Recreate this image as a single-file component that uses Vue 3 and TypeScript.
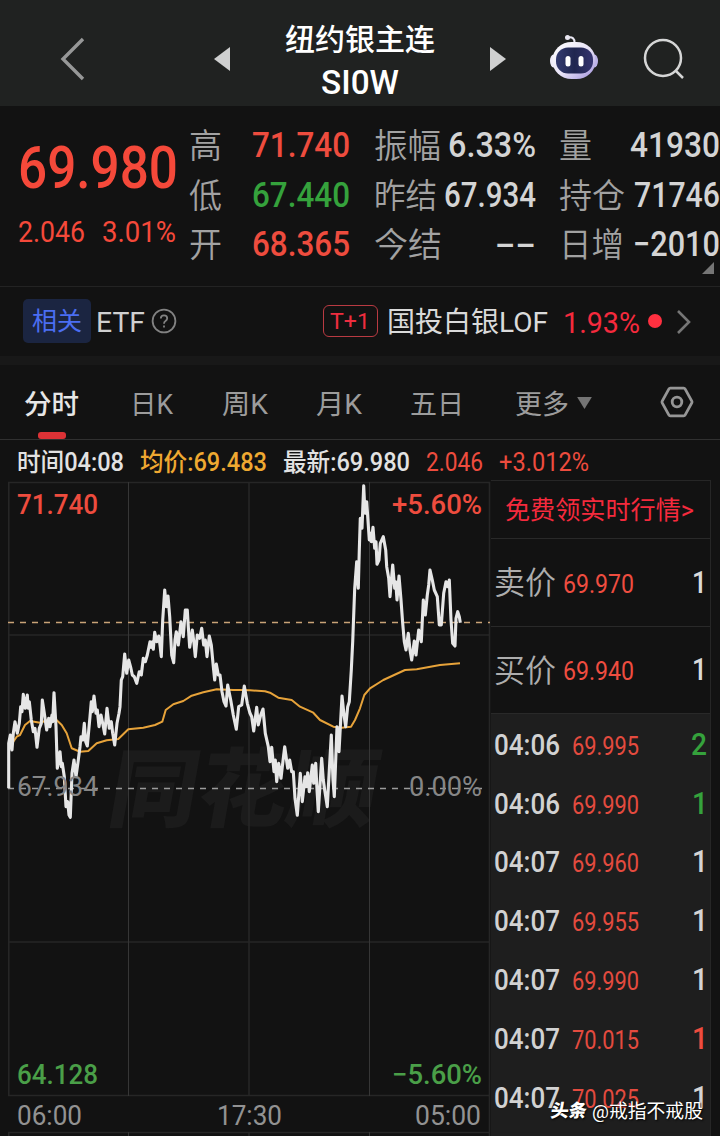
<script setup lang="ts">
import type { Directive } from 'vue'

type Tone = 'up' | 'down' | 'flat'
interface Trade { time: string; price: string; qty: string; tone: Tone }

// Condenses a label horizontally so that it occupies the given width.
const vFit: Directive<HTMLElement, number> = {
  mounted(el, { value }) {
    const natural = el.getBoundingClientRect().width
    el.style.transform = `scaleX(${value / natural})`
    el.style.marginRight = `${value - natural}px`
  },
}

const quotes = [
  [
    { label: '高', lw: 33, value: '71.740', w: 98, tone: 'up' },
    { label: '低', lw: 33, value: '67.440', w: 98, tone: 'down' },
    { label: '开', lw: 33, value: '68.365', w: 98, tone: 'up' },
  ],
  [
    { label: '振幅', lw: 67, value: '6.33%', w: 88, tone: 'flat' },
    { label: '昨结', lw: 63, value: '67.934', w: 92, tone: 'flat' },
    { label: '今结', lw: 68, value: '--', w: 41, tone: 'flat' },
  ],
  [
    { label: '量', lw: 33, value: '41930', w: 90, tone: 'flat' },
    { label: '持仓', lw: 66, value: '71746', w: 86, tone: 'flat' },
    { label: '日增', lw: 65, value: '−2010', w: 87, tone: 'flat' },
  ],
]

const tabs = [
  { name: '分时', w: 55 },
  { name: '日K', w: 43 },
  { name: '周K', w: 46 },
  { name: '月K', w: 46 },
  { name: '五日', w: 54 },
  { name: '更多', w: 54 },
]

const trades: Trade[] = [
  { time: '04:06', price: '69.995', qty: '2', tone: 'down' },
  { time: '04:06', price: '69.990', qty: '1', tone: 'down' },
  { time: '04:07', price: '69.960', qty: '1', tone: 'flat' },
  { time: '04:07', price: '69.955', qty: '1', tone: 'flat' },
  { time: '04:07', price: '69.990', qty: '1', tone: 'flat' },
  { time: '04:07', price: '70.015', qty: '1', tone: 'up' },
  { time: '04:07', price: '70.025', qty: '1', tone: 'flat' },
]

// Series samples are stored in thirds of a pixel, relative to a segment origin.
const segment = (x0: number, y0: number, raw: string): string =>
  raw
    .split(' ')
    .map((p) => {
      const [x, y] = p.split(',').map(Number)
      return `${(x0 + x / 3).toFixed(1)},${(y0 + y / 3).toFixed(1)}`
    })
    .join(' ')

const priceLine = [
  segment(0, 560, '26,685 26,550 31,525 36,570 40,520 45,485 52,520 58,490 62,440 66,455 70,403 76,445 82,405 85,445 88,425 94,480 100,515 105,505 111,562 118,505 124,490 127,420 133,460 140,510 146,475 150,500 156,465 158,485 162,398 168,500 172,625 180,575 184,620 187,610 193,650 198,740 203,725 207,765 211,772 216,640 222,600 228,650 235,600 240,560 243,530 248,540 253,490 257,545 262,558 270,470 274,425 277,455 282,408 288,460 292,450 297,500 303,465 308,490 314,522 321,445 328,505 334,485 338,520 344,555 351,490 357,460 360,440 364,360 368,350 374,282 380,340 386,300 392,322 397,345 403,350 410,370 418,335 424,345 430,295 436,305 442,285 450,245 454,262 458,245 460,268 464,217 470,245 476,228 480,255 484,290 488,180 494,90 499,140 504,108 509,170 515,285 521,308 525,240 529,215 535,255 543,185 550,230 556,150 562,150 565,200 569,262 577,210 582,250 586,290 592,225 599,235 605,205 611,255 616,240 621,290 628,228 634,255 640,320 644,360 649,312 655,345 660,345 666,395 672,425 678,438 683,375 692,420 700,465 709,508 716,440 725,435 733,378'),
  segment(240, 470, '22,700 30,730 35,740 41,783 50,712 55,765 62,735 69,717 76,790 85,830 90,875 95,832 102,905 106,870 110,935 116,880 123,925 128,880 134,830 143,895 149,870 155,905 160,905 165,985 172,1036 181,910 187,995 195,920 199,950 203,908 208,965 217,885 221,940 227,880 231,960 235,1025 245,865 250,930 254,960 262,1010 268,900 274,795 279,930 283,980 291,770 297,845 306,678 312,735 317,770 323,710 328,695 334,600 338,515 344,355 350,275 355,355 358,240 361,145 366,175 371,47 375,130 380,95 388,210 392,190 394,215 399,172 404,235 408,215 411,283 417,270 421,220 430,200 437,240 440,290 446,325 450,380 458,285 464,355 467,335 471,390 477,318 483,390 488,460 493,515 498,540 505,490 510,540 515,570 523,513 528,555 536,480 544,515 550,390 556,435 562,375 566,345 570,300 577,330 583,360 592,380 598,465 604,465 611,370 618,335 623,350 628,330 633,450 638,520 645,528 648,445 653,425 658,440 661,458'),
].join(' ')

const averageLine = [
  segment(0, 560, '26,560 40,545 50,530 60,525 75,495 90,483 120,488 150,478 167,478 185,495 200,520 215,565 240,575 265,573 290,550 320,541 355,537 385,508 430,503 465,495 487,485 497,450 520,433 550,423 575,407 610,397 650,388 700,390'),
  segment(240, 470, '0,660 30,661 75,664 90,668 115,683 155,690 180,710 220,728 240,750 280,770 305,773 333,770 345,750 360,715 373,675 390,655 430,630 495,600 530,598 600,585 660,580'),
].join(' ')

const chartLabels = [
  { text: '71.740', x: 17, y: 514, w: 81, tone: 'up' },
  { text: '+5.60%', x: 392, y: 514, w: 90, tone: 'up' },
  { text: '67.934', x: 17, y: 796, w: 81, tone: 'mid' },
  { text: '0.00%', x: 409, y: 796, w: 73, tone: 'mid' },
  { text: '64.128', x: 17, y: 1084, w: 81, tone: 'down' },
  { text: '−5.60%', x: 392, y: 1084, w: 90, tone: 'down' },
  { text: '06:00', x: 17, y: 1125, w: 65, tone: 'axis' },
  { text: '17:30', x: 217, y: 1125, w: 65, tone: 'axis' },
  { text: '05:00', x: 415, y: 1125, w: 66, tone: 'axis' },
]
</script>

<template>
  <div class="app">
    <header class="top">
      <svg class="back" width="28" height="46" viewBox="0 0 28 46"><path d="M25 3 5 23l20 20" /></svg>
      <svg class="prev" width="16" height="24" viewBox="0 0 16 24"><path d="M16 0v24L0 12z" /></svg>
      <div class="title">
        <div><span v-fit="150" class="fit name">纽约银主连</span></div>
        <div><span v-fit="78" class="fit code">SI0W</span></div>
      </div>
      <svg class="next" width="16" height="24" viewBox="0 0 16 24"><path d="M0 0v24l16-12z" /></svg>
      <svg class="robot" width="50" height="46" viewBox="0 0 50 46">
        <defs>
          <linearGradient id="shell" x1="0" y1="0" x2="1" y2="1">
            <stop offset="0" stop-color="#ffffff" />
            <stop offset=".55" stop-color="#e6e1f6" />
            <stop offset="1" stop-color="#9f90dc" />
          </linearGradient>
          <linearGradient id="visor" x1="0" y1="0" x2="1" y2="0">
            <stop offset="0" stop-color="#343b70" />
            <stop offset=".5" stop-color="#20264f" />
            <stop offset="1" stop-color="#35346f" />
          </linearGradient>
        </defs>
        <path d="M19 3.5q7-1 6.500 5.500" fill="none" stroke="#e9e7f2" stroke-width="2" />
        <circle cx="18.500" cy="3.500" r="2.500" fill="#e9e7f2" />
        <ellipse cx="4.500" cy="27" rx="3.500" ry="6.500" fill="#eeebf9" />
        <ellipse cx="45.500" cy="27" rx="3.500" ry="6.500" fill="#bdb3e8" />
        <rect x="3.500" y="8" width="43" height="37" rx="19" ry="18" fill="url(#shell)" />
        <rect x="7" y="13.500" width="37" height="26" rx="12" fill="url(#visor)" />
        <rect x="16.500" y="22" width="5" height="10.500" rx="2.500" fill="#fff" />
        <rect x="29.500" y="22" width="5" height="10.500" rx="2.500" fill="#fff" />
      </svg>
      <svg class="search" width="42" height="42" viewBox="0 0 42 42"><circle cx="20" cy="20" r="18" /><path d="m33 33 7 7" /></svg>
    </header>

    <section class="quote">
      <div class="last">
        <div class="last-price"><span v-fit="160" class="fit">69.980</span></div>
        <div class="change"><span v-fit="67" class="fit">2.046</span><span v-fit="74" class="fit">3.01%</span></div>
      </div>
      <div v-for="(col, i) in quotes" :key="i" class="stats">
        <div v-for="q in col" :key="q.label" class="stat">
          <span v-fit="q.lw" class="fit stat-label">{{ q.label }}</span>
          <span v-fit="q.w" class="fit stat-value" :class="q.tone">{{ q.value }}</span>
        </div>
      </div>
      <i class="corner"></i>
    </section>

    <section class="related">
      <span class="badge">相关</span>
      <span v-fit="49" class="fit etf">ETF</span>
      <svg class="help" width="26" height="26" viewBox="0 0 26 26">
        <circle cx="13" cy="13" r="11.4" />
        <path d="M9.8 10.6q0-3.3 3.2-3.3t3.2 3q0 1.6-1.7 2.8-1.5 1-1.5 2.6M13 17.4v2" />
      </svg>
      <span class="t1"><span v-fit="40" class="fit">T+1</span></span>
      <span v-fit="161" class="fit fund">国投白银LOF</span>
      <span v-fit="77" class="fit pct">1.93%</span>
      <i class="dot"></i>
      <svg class="more" width="16" height="26" viewBox="0 0 16 26"><path d="m2 2 11 11L2 24" /></svg>
    </section>

    <nav class="tabs">
      <div v-for="(t, i) in tabs" :key="t.name" class="tab" :class="{ active: i === 0 }">
        <span v-fit="t.w" class="fit">{{ t.name }}</span>
        <svg v-if="i === 5" class="caret" width="15" height="12" viewBox="0 0 16 13"><path d="M0 0h16L8 13z" /></svg>
      </div>
      <svg class="gear" width="34" height="32" viewBox="0 0 34 32">
        <path d="M10.3 2.2h13.4q1 0 1.5.9l6.6 12q.5.9 0 1.8l-6.6 12q-.5.9-1.5.9H10.3q-1 0-1.5-.9l-6.6-12q-.5-.9 0-1.8l6.6-12q.5-.9 1.5-.9z" />
        <circle cx="17" cy="16" r="4.8" />
      </svg>
    </nav>

    <div class="info">
      <span v-fit="107" class="fit">时间04:08</span>
      <span v-fit="127" class="fit avg">均价:69.483</span>
      <span v-fit="127" class="fit">最新:69.980</span>
      <span v-fit="57" class="fit up">2.046</span>
      <span v-fit="90" class="fit up">+3.012%</span>
    </div>

    <main class="body">
      <svg class="chart" width="491" height="656" viewBox="0 480 491 656">
        <text class="mark" transform="translate(105 820) skewX(-10)" textLength="268" lengthAdjust="spacingAndGlyphs">同花顺</text>
        <g class="grid">
          <path d="M8 482.5h482M8 635h482M8 942h482M8 1095.5h482M8 1132.5h482M8.8 482v614M249 482v614M489.5 482v654M8.8 1132v4M249 1132v4" stroke="#262626" stroke-width="1.6" />
          <path d="M128.5 482v614M369.5 482v614M128.5 1132v4M369.5 1132v4" stroke="#363636" />
        </g>
        <path d="M8 622.5h482" stroke="#c9a377" stroke-width="1.7" stroke-dasharray="6 6" />
        <path d="M8 788.5h474" stroke="#9a9a9a" stroke-width="1.5" stroke-dasharray="6 6" />
        <polyline :points="averageLine" class="average" />
        <polyline :points="priceLine" class="price" />
        <text
          v-for="l in chartLabels" :key="l.text" :x="l.x" :y="l.y" :textLength="l.w"
          lengthAdjust="spacingAndGlyphs" class="label" :class="l.tone"
        >{{ l.text }}</text>
      </svg>

      <aside class="side">
        <div class="promo"><span v-fit="189" class="fit">免费领实时行情&gt;</span></div>
        <div class="order"><span v-fit="62" class="fit side-name">卖价</span><span v-fit="71" class="fit side-price">69.970</span><b v-fit="15" class="fit qty">1</b></div>
        <div class="order"><span v-fit="62" class="fit side-name">买价</span><span v-fit="71" class="fit side-price">69.940</span><b v-fit="15" class="fit qty">1</b></div>
        <div class="ticks">
          <div v-for="(t, i) in trades" :key="i" class="tick">
            <span v-fit="66" class="fit tick-time">{{ t.time }}</span>
            <span v-fit="67" class="fit tick-price">{{ t.price }}</span>
            <b v-fit="16" class="fit qty" :class="[t.tone, { one: t.qty === '1' }]">{{ t.qty }}</b>
          </div>
        </div>
      </aside>
    </main>

    <div class="credit"><b>头条</b><span v-fit="111" class="fit">@戒指不戒股</span></div>
  </div>
</template>

<style>
html, body { background: #121212; overflow: hidden; }
</style>

<style scoped>
.app {
  position: relative;
  width: 720px;
  height: 1136px;
  overflow: hidden;
  background: #121212;
  color: #dadada;
  font-family: Roboto, "Noto Sans CJK SC", sans-serif;
}
.app * { box-sizing: border-box; }
svg { display: block; flex: none; }
.fit { display: inline-block; flex: none; white-space: nowrap; transform-origin: left center; }
.up { color: #ee4c3e; }
.down { color: #35a23c; }
.flat { color: #d4d4d4; }

.top { display: flex; align-items: center; height: 106px; padding-top: 11px; background: #202221; }
.back { margin-left: 58px; }
.back path { fill: none; stroke: #979898; stroke-width: 3.4; }
.prev { margin-left: 128px; }
.prev path, .next path { fill: #cfd0d0; }
.title { display: flex; flex-direction: column; align-items: center; width: 260px; color: #fff; font-weight: 500; text-align: center; margin-top: 5px; }
.title div { height: 43px; line-height: 43px; }
.name { font-size: 30px; }
.code { font-size: 33px; }
.robot { margin: -3px 0 0 43px; }
.search { margin-left: 44px; }
.search circle, .search path { fill: none; stroke: #d5d6d6; stroke-width: 2.5; }

.quote { position: relative; display: grid; grid-template-columns: 190px 161px 161px 160px; height: 181px; padding-top: 15px; border-bottom: 1px solid #232323; }
.last { padding-left: 18px; color: #f5493a; font-weight: 500; }
.last-price { height: 69px; margin-top: 12px; line-height: 69px; font-size: 60px; }
.change { display: flex; gap: 17px; height: 40px; margin-top: 10px; line-height: 40px; font-size: 29px; font-weight: 400; }
.stat { display: flex; justify-content: space-between; height: 49.5px; line-height: 50.5px; }
.stats { margin-left: -1px; margin-right: 1px; }
.stats + .stats { margin-left: 23px; margin-right: -24px; }
.stats + .stats + .stats { margin-left: 47px; margin-right: -48px; }
.stat-label { font-size: 34px; font-weight: 350; color: #a2a2a2; }
.stat-value { font-size: 35px; font-weight: 500; }
.corner { position: absolute; right: 6px; bottom: 12px; border: 6px solid transparent; border-right-color: #767676; border-bottom-color: #767676; }

.related { display: flex; align-items: center; height: 78px; padding: 0 28px 0 23px; border-bottom: 9px solid #181818; }
.badge { width: 68px; height: 44px; margin-top: -1px; border-radius: 5px; background: #1b2541; color: #4b6ef2; font-size: 25px; line-height: 46px; text-align: center; }
.etf { margin-left: 5px; font-size: 28px; color: #d0d0d0; line-height: 40px; padding-top: 2px; }
.help { margin: -1px 0 0 6px; }
.help circle, .help path { fill: none; stroke: #828282; stroke-width: 1.8; }
.t1 { width: 55px; height: 32px; margin: -1px 0 0 146px; padding-left: 6px; border: 1.5px solid #b93a42; border-radius: 6px; color: #ee2d3f; font-size: 22px; line-height: 31px; }
.fund { margin-left: 9px; padding-top: 3px; font-size: 28px; line-height: 40px; color: #dadada; }
.pct { margin-left: 15px; padding-top: 2px; font-size: 30px; color: #f52a3d; }
.dot { width: 14px; height: 14px; margin: -1px 0 0 8px; border-radius: 50%; background: #ff3040; }
.more { margin-left: 14px; }
.more path { fill: none; stroke: #767676; stroke-width: 2.6; }

.tabs { position: relative; display: grid; grid-template-columns: 106px 92px 94px 94px 105px 145px auto; height: 75px; padding-left: 24px; border-bottom: 1px solid #303030; }
.tab { position: relative; display: flex; align-items: center; height: 79px; line-height: 40px; font-size: 27px; color: #9c9c9c; }
.tab.active { color: #e6e6e6; font-weight: 500; }
.tab.active::after { content: ""; position: absolute; left: 14px; bottom: 5px; width: 28px; height: 7px; border-radius: 3px; background: #dc3236; }
.caret { margin: -3px 0 0 8px; }
.caret path { fill: #747474; }
.gear { margin: 21px 0 0; }
.gear path, .gear circle { fill: none; stroke: #969696; stroke-width: 2.8; }

.info { display: flex; gap: 16px; height: 40px; padding-left: 17px; line-height: 46px; font-size: 25px; font-weight: 500; color: #e2e2e2; }
.info .up { font-weight: 400; }
.avg { color: #efa931; }

.body { display: flex; height: 656px; }
.mark { font: 900 86px "Noto Sans CJK SC", sans-serif; fill: #1b1b1b; }
.average { fill: none; stroke: #e7a33a; stroke-width: 2; stroke-linejoin: round; }
.price { fill: none; stroke: #e6e6e6; stroke-width: 3.1; stroke-linejoin: round; }
.label { font-size: 28px; font-weight: 500; }
.label.up { fill: #ee4c3e; }
.label.down { fill: #4a9f48; }
.label.mid { fill: #868686; font-weight: 400; }
.label.axis { fill: #929292; font-weight: 400; }

.side { width: 220px; border-top: 1px solid #262626; border-right: 1px solid #262626; }
.promo { height: 58px; padding-left: 14px; border-bottom: 1px solid #292929; line-height: 60px; font-size: 25px; color: #f52a3d; }
.order { display: flex; align-items: center; height: 87.5px; padding: 0 3px 0 3px; border-bottom: 1.5px solid #292929; }
.side-name { padding-bottom: 4px; font-size: 32px; font-weight: 350; color: #adadad; }
.side-price { margin-left: 7px; padding-top: 3px; font-size: 26px; color: #ef4d40; }
.qty { margin-left: auto; padding-bottom: 1px; font-size: 32px; font-weight: 500; }
.ticks { height: 423px; padding-top: 1px; background: #1e1e1e; }
.tick { display: flex; align-items: center; height: 58.8px; padding: 0 3px 0 3px; }
.tick .one { position: relative; left: 1px; }
.tick-time { font-size: 30px; font-weight: 500; color: #d2d2d2; }
.tick-price { margin-left: 12px; padding-top: 4px; font-size: 25px; color: #e44b3f; }

.credit { position: absolute; left: 551px; top: 1094px; display: flex; align-items: center; gap: 5px; height: 30px; color: #fff; font-size: 19px; text-shadow: 1px 1px 2px #000; }
.credit b { font-size: 18px; font-weight: 900; transform: skewX(-8deg); }
</style>
